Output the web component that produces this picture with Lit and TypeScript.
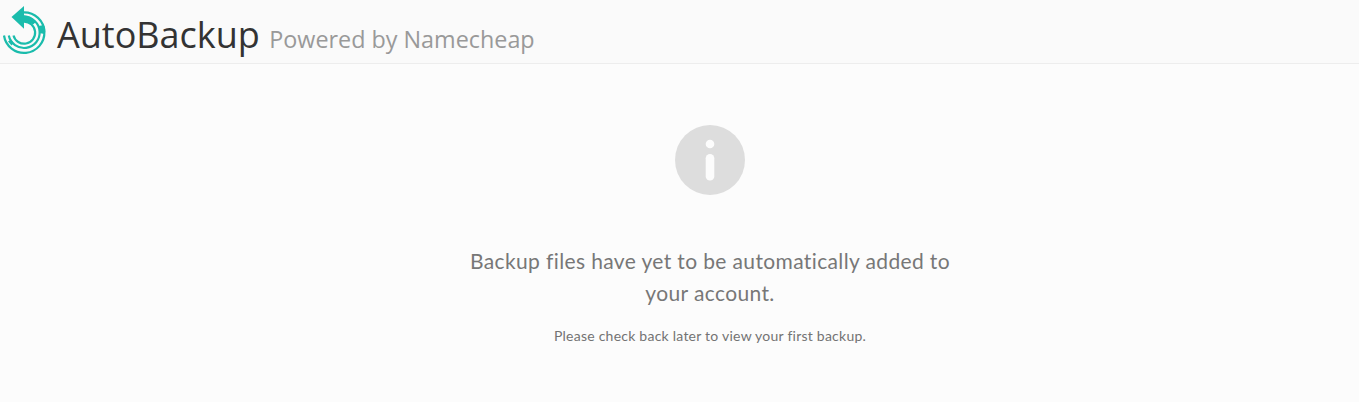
import { LitElement, html, css } from "lit";
import { customElement } from "lit/decorators.js";

@customElement("app-root")
class AppRoot extends LitElement {
  static styles = css`
    :host { display: block; min-height: 402px; background: #fcfcfc; }
    header { display: flex; box-sizing: border-box; height: 64px; padding: 5px 0 0 2px; background: #fafafa; border-bottom: 1px solid #ededed; font-family: "Open Sans", sans-serif; }
    .logo { display: block; flex: none; width: 45px; height: 50px; }
    h1 { margin: 10px 0 0 10px; font-size: 36px; line-height: 40px; font-weight: 400; color: #333; white-space: nowrap; }
    small { font-size: 23.35px; line-height: 1; color: #999; }
    main { display: flex; flex-direction: column; align-items: center; padding: 61px 0 0 61px; font-family: Lato, sans-serif; color: #737373; text-align: center; }
    .info { display: block; width: 70px; height: 70px; }
    h2 { margin: 50px 0 0; width: 500px; font-size: 21px; line-height: 32px; font-weight: 400; letter-spacing: 0.37px; color: #777; white-space: nowrap; }
    p { margin: 17px 0 0; font-size: 14px; line-height: 20px; letter-spacing: 0.24px; }
  `;
  render() {
    return html`
      <header>
        <svg class="logo" viewBox="2 5 45 50" fill="none" stroke="#1abcac" stroke-width="2.2">
          <path d="M24 6 11.5 17 24 28.7Z" fill="#1abcac" stroke="none" />
          <path d="M24 12.3A20.3 20.3 0 1 1 4 35.5" />
          <path d="M24 16.8A15.6 15.6 0 1 1 8.8 35.5" />
          <path d="M24 21.7A11 11 0 1 1 13.5 35.5" />
          <path d="M24 15.2Q31 15.5 36 22L33 24.5Q29 21.5 24 21.5Z" fill="#1abcac" stroke="none" />
          <path d="M38.5 26 43.8 25Q46.5 29 44.5 34L39 33Z" fill="#1abcac" stroke="none" />
          <path d="M8 41.5 11.5 45.5 13.5 43 11 39.5Z" fill="#1abcac" stroke="none" />
        </svg>
        <h1>AutoBackup <small>Powered by Namecheap</small></h1>
      </header>
      <main>
        <svg class="info" viewBox="0 0 70 70">
          <circle cx="35" cy="35" r="35" fill="#ddd" />
          <circle cx="35" cy="19" r="4.3" fill="#fcfcfc" />
          <rect x="30.7" y="29" width="8.6" height="26.5" rx="4.3" fill="#fcfcfc" />
        </svg>
        <h2>Backup files have yet to be automatically added to<br />your account.</h2>
        <p>Please check back later to view your first backup.</p>
      </main>
    `;
  }
}
